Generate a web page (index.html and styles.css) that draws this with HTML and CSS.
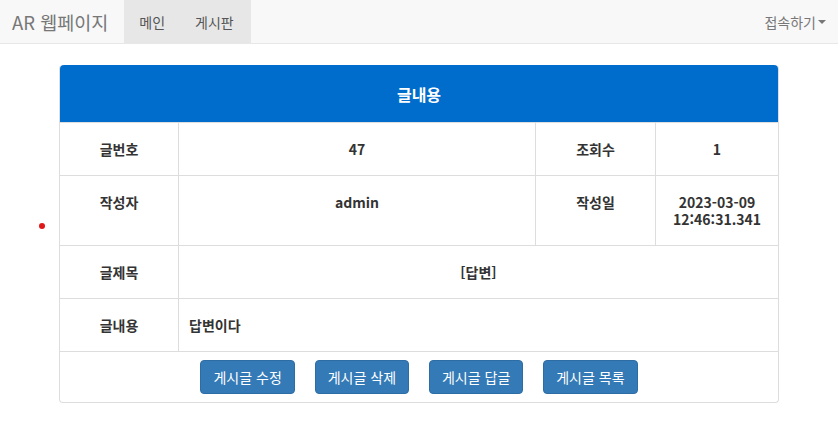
FILE: index.html
```html
<!DOCTYPE html>
<html lang="ko">
<head>
  <meta charset="UTF-8" />
  <title>AR 웹페이지</title>
  <link rel="stylesheet" href="styles.css">
</head>
<body>
  <nav class="navbar">
    <a class="brand" href="#">AR 웹페이지</a>
    <ul class="nav">
      <li class="active"><a href="#">메인</a></li>
      <li class="active"><a href="#">게시판</a></li>
    </ul>
    <ul class="nav nav-right">
      <li><a href="#">접속하기<span class="caret"></span></a></li>
    </ul>
  </nav>

  <div class="wrap">
    <span class="dot"></span>
    <table class="view">
      <thead>
        <tr><th colspan="4">글내용</th></tr>
      </thead>
      <tbody>
        <tr>
          <td class="c1">글번호</td>
          <td class="c2">47</td>
          <td class="c3">조회수</td>
          <td class="c4">1</td>
        </tr>
        <tr>
          <td>작성자</td>
          <td>admin</td>
          <td>작성일</td>
          <td class="date">2023-03-09<br>12:46:31.341</td>
        </tr>
        <tr>
          <td>글제목</td>
          <td colspan="3">[답변]</td>
        </tr>
        <tr>
          <td>글내용</td>
          <td colspan="3" class="left">답변이다</td>
        </tr>
        <tr>
          <td colspan="4" class="btns">
            <button class="btn">게시글 수정</button>
            <button class="btn">게시글 삭제</button>
            <button class="btn">게시글 답글</button>
            <button class="btn">게시글 목록</button>
          </td>
        </tr>
      </tbody>
    </table>
  </div>
</body>
</html>
```

FILE: styles.css
```css
body { margin: 0; font-family: "Noto Sans CJK KR", "Noto Sans", sans-serif; font-size: 14px; color: #333; background: #fff; }
a { text-decoration: none; }

.navbar { display: flex; align-items: stretch; height: 43px; background: #f8f8f8; border-bottom: 1px solid #e7e7e7; }
.brand { display: flex; align-items: center; padding: 0 16px 0 12px; font-size: 18.5px; color: #777; }
.nav { display: flex; margin: 0; padding: 0; list-style: none; }
.nav li a { display: flex; align-items: center; height: 100%; padding: 0 15px; color: #555; }
.nav li.active a { background: #e7e7e7; }
.nav li.active + li.active a { padding-right: 17px; }
.nav-right { margin-left: auto; }
.nav-right li a { padding: 0 12px 0 15px; color: #777; }
.caret { display: inline-block; margin-left: 2px; border-top: 4px solid #777; border-left: 4px solid transparent; border-right: 4px solid transparent; }

.wrap { position: relative; width: 720px; margin: 21px auto 0; }
.dot { position: absolute; left: -20px; top: 158px; width: 6px; height: 6px; border-radius: 50%; background: #e01818; }

.view { width: 100%; border-collapse: separate; border-spacing: 0; border: 1px solid #ddd; border-top: none; border-radius: 4px; }
.view th { background: #006dcc; color: #fff; font-size: 16px; font-weight: bold; height: 57px; padding: 0; border-radius: 4px 4px 0 0; }
.view td { height: 17px; padding: 18px 8px 17px; line-height: 17px; text-align: center; vertical-align: top; font-weight: bold; border-top: 1px solid #ddd; border-left: 1px solid #ddd; }
.view td:first-child { border-left: none; }
.view .c1 { width: 102px; }
.view .c3 { width: 103px; }
.view .c4 { width: 106px; }
.view td.date { line-height: 17px; }
.view td.left { text-align: left; padding-left: 10px; }
.view td.btns { height: 34px; padding: 8px 0 8px; }

.btn { height: 34px; margin: 0 8px; padding: 0 12px; background: #337ab7; border: 1px solid #2e6da4; border-radius: 4px; color: #fff; font-family: inherit; font-size: 14px; }
```
